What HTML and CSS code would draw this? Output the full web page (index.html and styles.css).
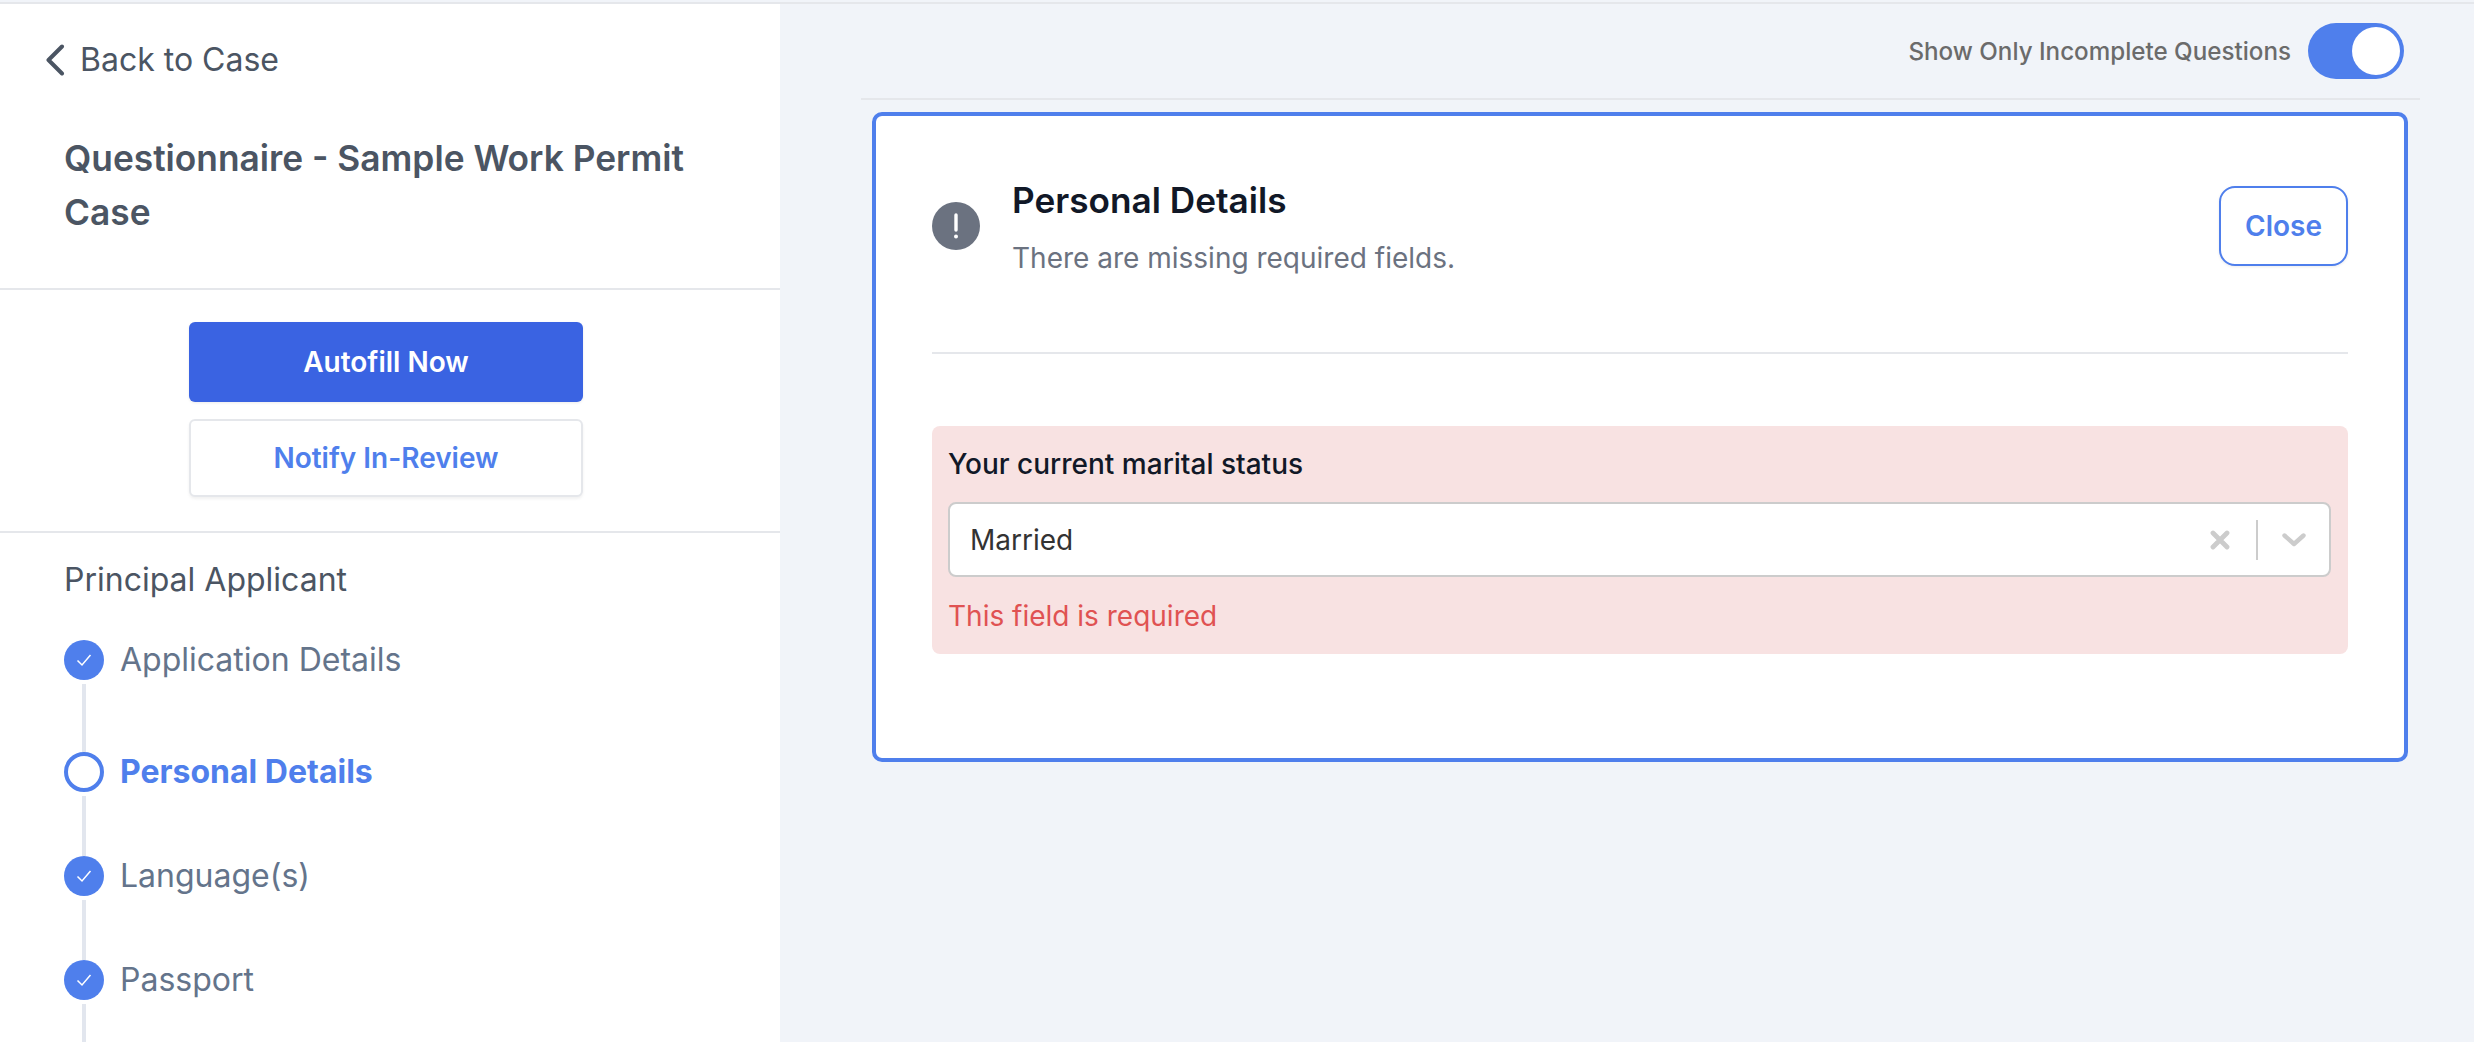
FILE: index.html
```html
<!DOCTYPE html>
<html lang="en">
<head>
<meta charset="utf-8">
<title>Questionnaire - Sample Work Permit Case</title>
<link rel="stylesheet" href="styles.css">
</head>
<body>
<div class="app">
  <aside class="sidebar">
    <a class="back">
      <svg class="back-icon" viewBox="0 0 20 32" width="20" height="32"><path d="M17 2.5 L3.5 16 L17 29.5" fill="none" stroke="#4b5563" stroke-width="4" stroke-linecap="round" stroke-linejoin="round"/></svg>
      <span>Back to Case</span>
    </a>
    <h1 class="title">Questionnaire - Sample Work Permit Case</h1>
    <div class="actions">
      <button class="btn btn-primary">Autofill Now</button>
      <button class="btn btn-outline">Notify In-Review</button>
    </div>
    <nav class="nav">
      <div class="nav-head">Principal Applicant</div>
      <ol class="steps">
        <li class="step step-first">
          <div class="marker"><span class="dot"><svg viewBox="0 0 20 20" width="20" height="20"><path d="M3.5 10.5 L8 15 L16.5 5" fill="none" stroke="#fff" stroke-width="1.5"/></svg></span><span class="rail"></span></div>
          <span class="step-label">Application Details</span>
        </li>
        <li class="step">
          <div class="marker"><span class="dot dot-current"></span><span class="rail"></span></div>
          <span class="step-label step-current">Personal Details</span>
        </li>
        <li class="step">
          <div class="marker"><span class="dot"><svg viewBox="0 0 20 20" width="20" height="20"><path d="M3.5 10.5 L8 15 L16.5 5" fill="none" stroke="#fff" stroke-width="1.5"/></svg></span><span class="rail"></span></div>
          <span class="step-label">Language(s)</span>
        </li>
        <li class="step">
          <div class="marker"><span class="dot"><svg viewBox="0 0 20 20" width="20" height="20"><path d="M3.5 10.5 L8 15 L16.5 5" fill="none" stroke="#fff" stroke-width="1.5"/></svg></span><span class="rail"></span></div>
          <span class="step-label">Passport</span>
        </li>
      </ol>
    </nav>
  </aside>
  <main class="main">
    <div class="topbar">
      <span class="toggle-label">Show Only Incomplete Questions</span>
      <span class="toggle"><span class="knob"></span></span>
    </div>
    <section class="card">
      <header class="card-head">
        <span class="alert-icon"><svg viewBox="0 0 48 48" width="48" height="48"><path d="M24 13 V28" stroke="#fff" stroke-width="3.4" stroke-linecap="round"/><circle cx="24" cy="34.5" r="2" fill="#fff"/></svg></span>
        <div class="head-text">
          <h2 class="card-title">Personal Details</h2>
          <p class="card-sub">There are missing required fields.</p>
        </div>
        <button class="btn-close">Close</button>
      </header>
      <hr class="rule">
      <div class="field">
        <label class="field-label">Your current marital status</label>
        <div class="select">
          <span class="select-value">Married</span>
          <svg class="select-clear" viewBox="0 0 20 20" width="20" height="20"><path d="M3 3 L17 17 M17 3 L3 17" stroke="#cccccc" stroke-width="4.8" stroke-linecap="round"/></svg>
          <span class="select-sep"></span>
          <svg class="select-caret" viewBox="0 0 24 14" width="24" height="14"><path d="M2.5 2.5 L12 11 L21.5 2.5" fill="none" stroke="#cccccc" stroke-width="4.4" stroke-linecap="round" stroke-linejoin="round"/></svg>
        </div>
        <div class="field-error">This field is required</div>
      </div>
    </section>
  </main>
</div>
</body>
</html>
```
FILE: styles.css
```css
* { box-sizing: border-box; }
html, body { margin: 0; height: 1042px; overflow: hidden; }
body {
  font-family: Inter, "Liberation Sans", sans-serif;
  background: #f1f4f9;
  padding-top: 2px;
}
.app {
  display: flex;
  height: 1040px;
  border-top: 2px solid #e5e7eb;
  overflow: hidden;
}
.sidebar {
  width: 780px;
  flex: none;
  background: #fff;
  display: flex;
  flex-direction: column;
}
.back {
  display: flex;
  align-items: center;
  gap: 15px;
  height: 40px;
  margin: 36px 0 0 45px;
  font-size: 32px;
  color: #4b5563;
}
.title {
  margin: 0;
  padding: 53px 80px 48px 64px;
  font-size: 35.3px;
  line-height: 54px;
  font-weight: 600;
  color: #4b5563;
  border-bottom: 2px solid #e5e7eb;
}
.actions {
  display: flex;
  flex-direction: column;
  align-items: center;
  gap: 17px;
  padding: 32px 8px 34px 0;
  border-bottom: 2px solid #e5e7eb;
}
.btn {
  width: 394px;
  font: 600 28px Inter, sans-serif;
  border-radius: 6px;
  cursor: pointer;
}
.btn-primary {
  height: 80px;
  background: #3a63e2;
  color: #fff;
  border: 0;
  box-shadow: 0 1px 3px rgba(0, 0, 0, .08);
}
.btn-outline {
  height: 78px;
  background: #fff;
  color: #4f7fec;
  border: 2px solid #e5e7eb;
  box-shadow: 0 2px 3px rgba(0, 0, 0, .06);
}
.nav { padding: 27px 0 0 64px; }
.nav-head {
  font-size: 32px;
  line-height: 40px;
  color: #4b5563;
}
.steps {
  list-style: none;
  margin: 40px 0 0;
  padding: 0;
}
.step {
  display: flex;
  gap: 16px;
  height: 104px;
}
.step-first { height: 112px; }
.marker {
  width: 40px;
  display: flex;
  flex-direction: column;
  align-items: center;
}
.dot {
  width: 40px;
  height: 40px;
  flex: none;
  border-radius: 50%;
  background: #4f7fec;
  display: flex;
  align-items: center;
  justify-content: center;
}
.dot-current {
  background: #fff;
  border: 4px solid #4f7fec;
}
.rail {
  width: 4px;
  flex: 1;
  margin-top: 4px;
  background: #e2e6ee;
}
.step-label {
  font-size: 32px;
  line-height: 40px;
  color: #64748b;
}
.step-current {
  color: #4f7fec;
  font-weight: 700;
}
.main {
  flex: 1;
  min-width: 0;
  padding-left: 81px;
  padding-right: 54px;
}
.topbar {
  height: 96px;
  display: flex;
  align-items: center;
  justify-content: flex-end;
  gap: 17px;
  padding: 0 16px 0 0;
  border-bottom: 2px solid #e5e7eb;
}
.toggle-label {
  font-size: 24.2px;
  font-weight: 500;
  color: #6b6b6b;
}
.toggle {
  width: 96px;
  height: 56px;
  border-radius: 28px;
  background: #4f7fec;
  padding: 4px;
  display: flex;
  justify-content: flex-end;
}
.knob {
  width: 48px;
  height: 48px;
  border-radius: 50%;
  background: #fff;
}
.card {
  margin: 12px 12px 0 11px;
  height: 650px;
  background: #fff;
  border: 4px solid #4f7fec;
  border-radius: 10px;
  padding: 56px 56px 0;
}
.card-head {
  display: flex;
  align-items: center;
  height: 108px;
}
.alert-icon {
  width: 48px;
  height: 48px;
  flex: none;
  border-radius: 50%;
  background: #6b7280;
  margin-right: 32px;
}
.alert-icon svg { display: block; }
.head-text {
  flex: 1;
  align-self: flex-start;
  padding-top: 8px;
}
.card-title {
  margin: 0 0 20px;
  font-size: 35.2px;
  line-height: 40px;
  font-weight: 600;
  color: #111827;
}
.card-sub {
  margin: 0;
  font-size: 28px;
  line-height: 36px;
  color: #6b7280;
}
.btn-close {
  width: 129px;
  height: 80px;
  background: #fff;
  color: #4f7fec;
  border: 2px solid #4f7fec;
  border-radius: 16px;
  font: 600 28px Inter, sans-serif;
  box-shadow: 0 1px 3px rgba(0, 0, 0, .08);
}
.rule {
  margin: 72px 0;
  height: 2px;
  border: 0;
  background: #e5e7eb;
}
.field {
  height: 228px;
  background: #f8e2e2;
  border-radius: 8px;
  padding: 21px 17px 0 16px;
}
.field-label {
  display: block;
  font-size: 28px;
  line-height: 34px;
  font-weight: 500;
  color: #111827;
}
.select {
  margin-top: 21px;
  height: 75px;
  background: #fff;
  border: 2px solid #cccccc;
  border-radius: 8px;
  display: flex;
  align-items: center;
  padding: 0 23px 0 20px;
}
.select-value {
  flex: 1;
  font-size: 28px;
  color: #333333;
}
.select-clear { margin-right: 26px; }
.select-sep {
  width: 2px;
  height: 40px;
  background: #cccccc;
  margin-right: 24px;
}
.field-error {
  margin-top: 22px;
  font-size: 28px;
  line-height: 34px;
  color: #e05252;
}
```
